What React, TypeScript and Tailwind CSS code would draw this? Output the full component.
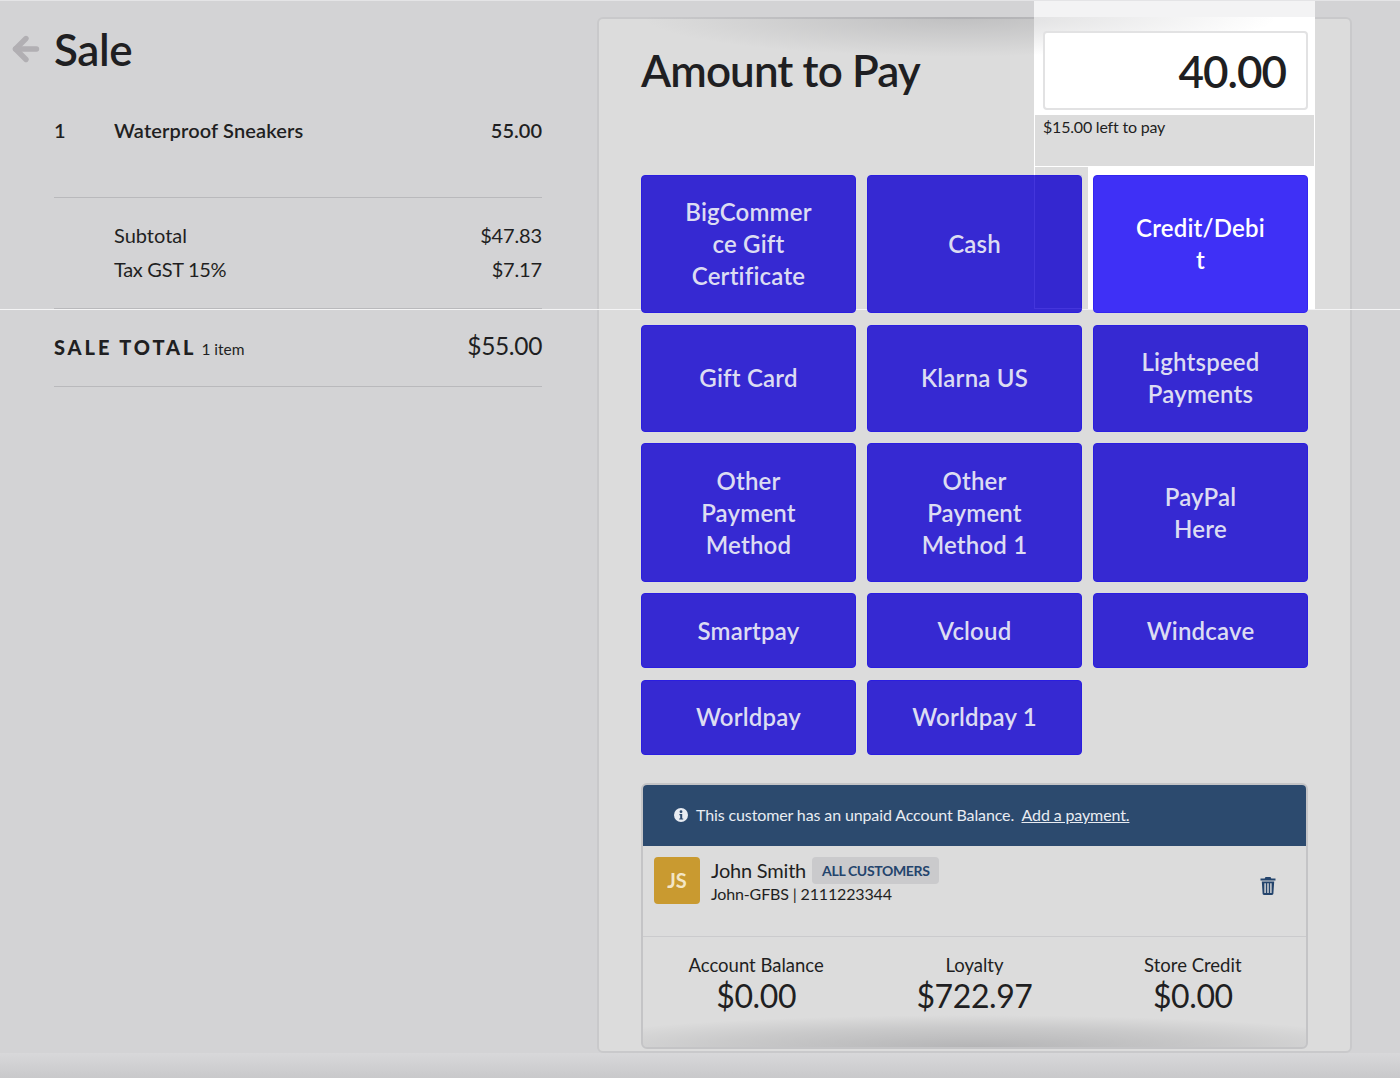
import { ArrowLeft } from "lucide-react";

const METHODS = [
  "BigCommerce Gift Certificate",
  "Cash",
  "Credit/Debit",
  "Gift Card",
  "Klarna US",
  "Lightspeed Payments",
  "Other Payment Method",
  "Other Payment Method 1",
  "PayPal Here",
  "Smartpay",
  "Vcloud",
  "Windcave",
  "Worldpay",
  "Worldpay 1",
];

const STATS = [
  { label: "Account Balance", value: "$0.00" },
  { label: "Loyalty", value: "$722.97" },
  { label: "Store Credit", value: "$0.00" },
];

function PayButton({ name }: { name: string }) {
  const active = name === "Credit/Debit";
  return (
    <button
      className={`relative z-10 flex items-center justify-center rounded border px-[42px] text-center text-[24px] leading-[32px] font-semibold tracking-[0.2px] [overflow-wrap:anywhere] ${
        active
          ? "border-[#3325f0] bg-[#3f30f6] text-white"
          : "border-[#2a1ee0] bg-[#3629d2] text-[#dcdcf2]"
      }`}
    >
      {name}
    </button>
  );
}

export default function App() {
  return (
    <div className="relative flex h-[1078px] overflow-hidden border-t border-[#e4e4e6] bg-[#d3d3d5] font-['Lato',sans-serif] text-[#1f1f22]">
      <div className="absolute top-0 left-[1034px] z-[1] h-[16px] w-[281px] bg-[#f3f3f4]" />
      <div className="absolute top-[16px] left-[1034px] z-[1] h-[97px] w-[281px] bg-white" />
      <div className="absolute top-[113px] left-[1034px] z-[1] h-[53px] w-[281px] border border-white bg-[#dcdcdc]" />
      <div className="absolute top-[165px] left-[1088px] z-[1] h-[143px] w-[227px] bg-white" />
      <div className="absolute top-[165px] left-[1034px] z-[1] h-[143px] w-[54px] border-t border-l border-white" />
      <div className="absolute top-[308px] left-0 z-[1] h-px w-[1400px] bg-[#f4f4f5]" />
      <div className="absolute top-[174px] left-[1034px] z-20 h-[134px] w-[48px] border-b border-l border-[#4435dc] bg-[#2a1ec8]/10" />
      {/* soft shadows */}
      <div className="absolute top-[16px] left-[640px] z-[2] h-[40px] w-[640px] bg-[radial-gradient(ellipse_at_top,rgba(90,90,95,0.22),transparent_70%)]" />
      <div className="absolute top-[1052px] left-0 h-[26px] w-full bg-gradient-to-b from-[#d8d8da] to-[#c8c8ca]" />

      <div className="relative w-[597px] shrink-0 pl-3">
        <div className="mt-[23px] flex h-[50px] items-center gap-[14px]">
          <ArrowLeft size={36} strokeWidth={3.6} className="-mx-[4px] text-[#b1afb3]" />
          <h1 className="text-[44px] leading-[50px] font-semibold tracking-[-0.4px]">Sale</h1>
        </div>
        <div className="ml-[42px] w-[488px] text-[20px]">
          <div className="flex h-[124px] items-start border-b border-[#b9b9bc] pt-[44px] leading-[24px] font-semibold">
            <span className="w-[60px]">1</span>
            <span className="flex-1 tracking-[0.15px]">Waterproof Sneakers</span>
            <span>55.00</span>
          </div>
          <div className="border-b border-[#b9b9bc] pt-[20px] pb-[22px] pl-[60px] leading-[34px]">
            <div className="flex justify-between">
              <span>Subtotal</span>
              <span className="tracking-[-0.15px]">$47.83</span>
            </div>
            <div className="flex justify-between">
              <span className="tracking-[-0.3px]">Tax GST 15%</span>
              <span className="tracking-[-0.15px]">$7.17</span>
            </div>
          </div>
          <div className="flex h-[78px] items-center justify-between border-b border-[#b9b9bc]">
            <div className="-mt-[2px] flex items-baseline gap-[5px]">
              <span className="text-[20px] font-black tracking-[0.145em]">SALE TOTAL</span>
              <span className="text-[15.5px]">1 item</span>
            </div>
            <span className="-mt-[3px] text-[24.5px] tracking-[-0.35px]">$55.00</span>
          </div>
        </div>
      </div>

      <div className="mt-[16px] h-[1036px] w-[755px] shrink-0 rounded-md border-2 border-[#c9c9cb] bg-[#dcdcdc] px-[42px] pt-[12px]">
        <div className="flex h-[143.9px] items-start justify-between">
          <h2 className="relative z-10 mt-[13px] text-[44px] leading-[52px] font-semibold tracking-[-0.9px]">Amount to Pay</h2>
          <div className="relative z-10 w-[265px]">
            <div className="flex h-[79px] items-center justify-end rounded border-2 border-[#e2e2e3] bg-white pr-[20px] text-[44px] font-semibold tracking-[-1px]">
              40.00
            </div>
            <p className="mt-[7px] text-[16px] leading-[20px] tracking-[-0.2px]">$15.00 left to pay</p>
          </div>
        </div>

        <div className="grid grid-cols-3 grid-rows-[138.5px_107px_138.8px_75px_75px] gap-x-[11px] gap-y-[11.4px]">
          {METHODS.map((m) => (
            <PayButton key={m} name={m} />
          ))}
        </div>

        <div className="relative mt-[28px] h-[266px] overflow-hidden rounded-md border-2 border-[#c4c4c6]">
          <div className="absolute right-[-100px] bottom-0 left-[-100px] h-[32px] bg-[radial-gradient(ellipse_farthest-side_at_bottom,rgba(90,90,95,0.3),rgba(90,90,95,0.14)_60%,transparent_100%)]" />
          <div className="flex h-[61px] items-center gap-[8px] bg-[#2c4a6e] pb-[1px] pl-[31px] text-[16px] tracking-[-0.12px] text-[#e8ecf2]">
            <svg width="14" height="14" viewBox="0 0 14 14">
              <circle cx="7" cy="7" r="7" fill="#e8ecf2" />
              <circle cx="7" cy="3.7" r="1.4" fill="#2c4a6e" />
              <path d="M5.4 6h2.8v4.4h1v1.2H5.2v-1.2h1V7.2h-.8z" fill="#2c4a6e" />
            </svg>
            <span>
              This customer has an unpaid Account Balance.&nbsp;{" "}
              <span className="underline">Add a payment.</span>
            </span>
          </div>
          <div className="flex h-[91px] items-start border-b border-[#cbcbcd] pt-[11px] pr-[30px] pl-[11px]">
            <div className="flex h-[47px] w-[46px] items-center justify-center rounded bg-[#c99a30] text-[20px] font-bold text-[#f3e6c6]">
              JS
            </div>
            <div className="ml-[11px] flex-1">
              <div className="flex items-center gap-[6px]">
                <span className="text-[20px] leading-[27px] tracking-[-0.2px]">John Smith</span>
                <span className="rounded bg-[#cacacc] px-[10px] text-[14px] leading-[27px] font-bold tracking-[-0.35px] text-[#24446c]">
                  ALL CUSTOMERS
                </span>
              </div>
              <div className="text-[16px] leading-[20px] tracking-[-0.15px]">John-GFBS | 2111223344</div>
            </div>
            <svg width="16" height="18" viewBox="0 0 16 18" className="mt-[20px] text-[#24446c]" fill="currentColor">
              <path d="M5.5 0h5l.8 1.6H15.5V3.4H.5V1.6h4.2z" />
              <path fillRule="evenodd" d="M1.8 4.4h12.4l-.8 12.2c0 .8-.6 1.4-1.4 1.4H4c-.8 0-1.4-.6-1.4-1.4zM4.4 6.2v9.8h1.4V6.2zM7.3 6.2v9.8h1.4V6.2zM10.2 6.2v9.8h1.4V6.2z" />
            </svg>
          </div>
          <div className="grid grid-cols-3 px-[4px] pt-[16px] text-center">
            {STATS.map((s) => (
              <div key={s.label}>
                <div className="text-[18.5px] leading-[24px]">{s.label}</div>
                <div className="text-[32px] leading-[37px] tracking-[-0.4px]">{s.value}</div>
              </div>
            ))}
          </div>
        </div>
      </div>
    </div>
  );
}
